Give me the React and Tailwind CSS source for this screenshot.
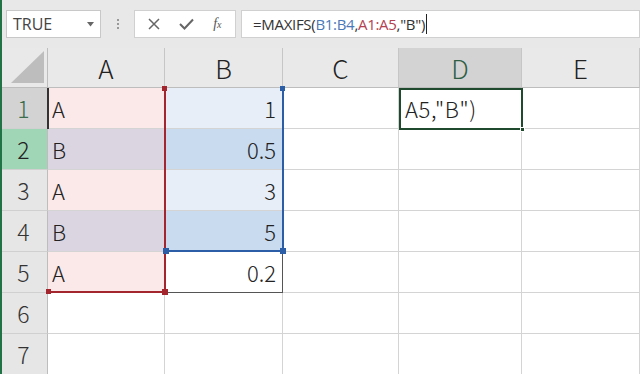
import React from "react";

const cols = ["A", "B", "C", "D", "E"];

const rows = [
  { n: 1, a: "A", b: "1", aCls: "bg-[#fbe9e9]", bCls: "bg-[#e7eef8]", hCls: "bg-[#d3d3d3] text-[#3c6e4e]" },
  { n: 2, a: "B", b: "0.5", aCls: "bg-[#dbd5e1]", bCls: "bg-[#c9dbef]", hCls: "bg-[#a0d6b6] text-[#222]" },
  { n: 3, a: "A", b: "3", aCls: "bg-[#fbe9e9]", bCls: "bg-[#e7eef8]", hCls: "bg-[#e6e6e6] text-[#333]" },
  { n: 4, a: "B", b: "5", aCls: "bg-[#dbd5e1]", bCls: "bg-[#c9dbef]", hCls: "bg-[#e6e6e6] text-[#333]" },
  { n: 5, a: "A", b: "0.2", aCls: "bg-[#fbe9e9]", bCls: "bg-white border-r-[#555] border-b-[#555]", hCls: "bg-[#e6e6e6] text-[#333]" },
  { n: 6, a: "", b: "", aCls: "bg-white", bCls: "bg-white", hCls: "bg-[#e6e6e6] text-[#333]" },
  { n: 7, a: "", b: "", aCls: "bg-white", bCls: "bg-white", hCls: "bg-[#e6e6e6] text-[#333]" },
];

const cellFont = { fontFamily: '"Noto Sans CJK JP", "Noto Sans", sans-serif' };

export default function App() {
  return (
    <div
      className="w-[640px] h-[374px] overflow-hidden bg-white flex flex-col relative"
      style={{ fontFamily: '"Noto Sans CJK JP", "Noto Sans", sans-serif' }}
    >
      {/* left window edge */}
      <div className="absolute left-0 top-0 w-[2px] h-full bg-[#217346] z-20" />

      {/* formula bar */}
      <div className="h-[48px] shrink-0 bg-[#e8e8e8] flex items-center pl-[6px] gap-0">
        <div className="w-[95px] h-[28px] bg-white border border-[#c8c8c8] flex items-center justify-between pl-[6px] pr-[6px]">
          <span className="text-[16px] text-[#444] leading-none" style={{ fontFamily: '"Open Sans", sans-serif' }}>TRUE</span>
          <svg width="7" height="5" viewBox="0 0 7 5"><path d="M0 0 L7 0 L3.5 4.5 Z" fill="#666" /></svg>
        </div>
        <div className="w-[33px] flex flex-col items-center gap-[2px]">
          <div className="w-[2px] h-[2px] bg-[#999]" />
          <div className="w-[2px] h-[2px] bg-[#999]" />
          <div className="w-[2px] h-[2px] bg-[#999]" />
        </div>
        <div className="w-[102px] h-[28px] bg-white border border-[#d0d0d0] flex items-center justify-around px-[4px]">
          <svg width="12" height="12" viewBox="0 0 12 12"><path d="M1 1 L11 11 M11 1 L1 11" stroke="#666" strokeWidth="1.5" /></svg>
          <svg width="15" height="12" viewBox="0 0 15 12"><path d="M1 6 L5.5 10.5 L14 1.5" stroke="#666" strokeWidth="2" fill="none" /></svg>
          <span className="text-[14px] italic text-[#555] leading-none" style={{ fontFamily: '"Liberation Serif", serif' }}>
            f<span className="text-[10px]">x</span>
          </span>
        </div>
        <div className="ml-[5px] flex-1 h-[28px] bg-white border border-[#d0d0d0] flex items-center pl-[11px]">
          <span className="text-[15px] leading-none text-[#333] tracking-[-0.3px]" style={{ fontFamily: '"Open Sans", sans-serif' }}>
            =MAXIFS(<span className="text-[#4a79b8]">B1:B4</span>,<span className="text-[#b2424f]">A1:A5</span>,"B")
          </span>
          <span className="w-[1px] h-[20px] bg-[#222] ml-[1px]" />
        </div>
      </div>

      {/* sheet grid */}
      <div className="relative flex-1">
        <div className="grid grid-cols-[48px_117px_118px_116px_123px_118px] grid-rows-[40px_repeat(7,41px)]">
          {/* corner */}
          <div className="bg-[#e9e9e9] border-r border-b border-[#bdbdbd] flex items-end justify-end pr-[3px] pb-[4px]">
            <svg width="33" height="32" viewBox="0 0 33 32"><path d="M33 0 L33 32 L0 32 Z" fill="#bdbdbd" /></svg>
          </div>
          {cols.map((c) => (
            <div
              key={c}
              className={
                c === "D"
                  ? "bg-[#d3d3d3] border-r border-b border-r-[#c6c6c6] border-b-[#bdbdbd] flex items-center justify-center text-[26px] font-light text-[#2f5f44] leading-none"
                  : "bg-[#e9e9e9] border-r border-b border-r-[#c6c6c6] border-b-[#bdbdbd] flex items-center justify-center text-[26px] font-light text-[#222] leading-none"
              }
            >
              {c}
            </div>
          ))}
          {rows.map((r) => (
            <React.Fragment key={r.n}>
              <div className={`${r.hCls} border-r border-b border-r-[#bdbdbd] border-b-[#d0d0d0] flex items-center justify-center text-[23px] font-light leading-none`}>
                {r.n}
              </div>
              <div className={`${r.aCls} border-r border-b border-[#d4d4d4] flex items-center pl-[4px] text-[22px] font-light text-[#222] leading-none`} style={cellFont}>
                {r.a}
              </div>
              <div className={`border-r border-b border-[#d4d4d4] ${r.bCls} flex items-center justify-end pr-[6px] text-[22px] font-light text-[#222] leading-none`} style={cellFont}>
                {r.b}
              </div>
              <div className="bg-white border-r border-b border-[#d4d4d4]" />
              <div className="bg-white border-r border-b border-[#d4d4d4] flex items-center pl-[6px] text-[22px] font-light text-[#222] leading-none tracking-[0.6px]" style={cellFont}>
                {r.n === 1 ? 'A5,"B")' : ""}
              </div>
              <div className="bg-white border-r border-b border-[#d4d4d4]" />
            </React.Fragment>
          ))}
        </div>

        {/* left edge mark on A1 */}
        <div className="absolute left-[47px] top-[40px] w-[2px] h-[41px] bg-[#333]" />

        {/* red range A1:A5 */}
        <div className="absolute left-[164px] top-[40px] w-[2px] h-[205px] bg-[#a3262f]" />
        <div className="absolute left-[48px] top-[243px] w-[118px] h-[2px] bg-[#a3262f]" />
        <div className="absolute left-[162px] top-[38px] w-[5px] h-[5px] bg-[#a3262f]" />
        <div className="absolute left-[46px] top-[241px] w-[5px] h-[5px] bg-[#a3262f]" />
        <div className="absolute left-[162px] top-[241px] w-[6px] h-[6px] bg-[#a3262f]" />

        {/* blue range B1:B4 */}
        <div className="absolute left-[282px] top-[40px] w-[2px] h-[164px] bg-[#2c5ea8]" />
        <div className="absolute left-[166px] top-[202px] w-[118px] h-[2px] bg-[#2c5ea8]" />
        <div className="absolute left-[280px] top-[38px] w-[5px] h-[5px] bg-[#2c5ea8]" />
        <div className="absolute left-[163px] top-[200px] w-[6px] h-[6px] bg-[#2c5ea8]" />
        <div className="absolute left-[280px] top-[200px] w-[6px] h-[6px] bg-[#2c5ea8]" />

        {/* active cell D1 */}
        <div className="absolute left-[399px] top-[40px] w-[124px] h-[42px] border-2 border-[#1f4a2e]" />
        <div className="absolute left-[520px] top-[79px] w-[5px] h-[5px] bg-[#1f4a2e] border border-white" />
      </div>
    </div>
  );
}
